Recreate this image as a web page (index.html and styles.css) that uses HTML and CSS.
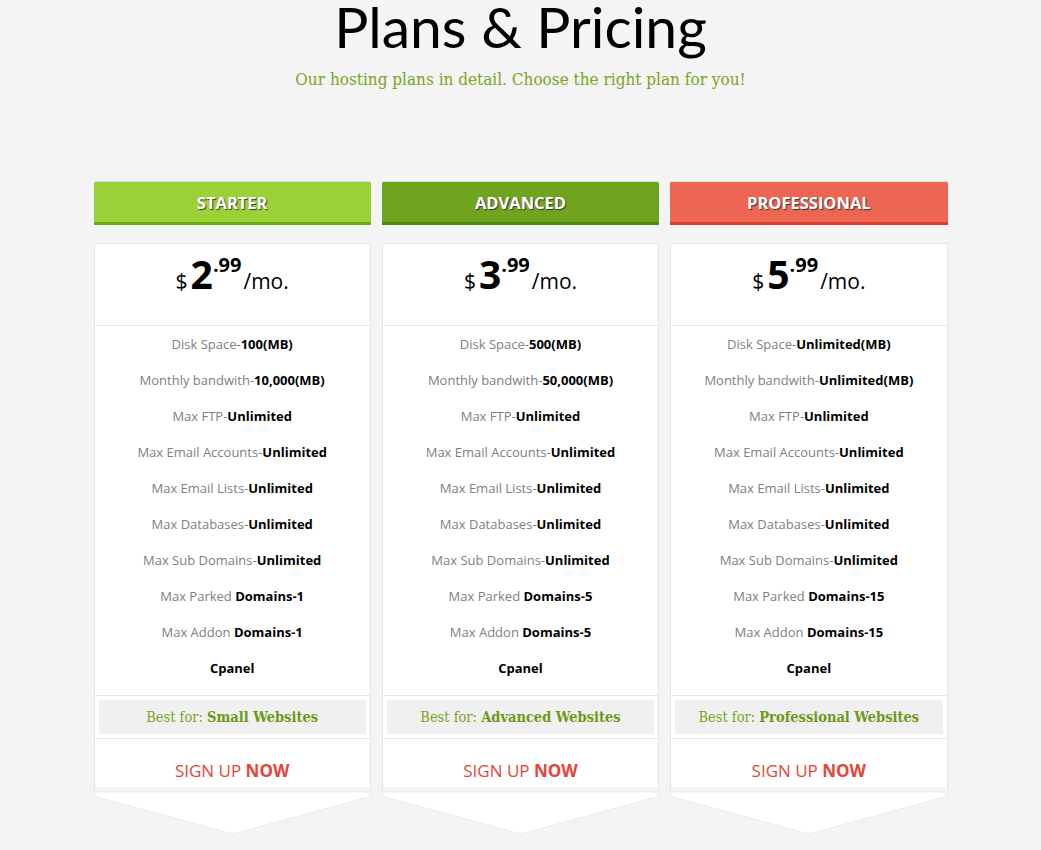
FILE: index.html
```html
<!DOCTYPE html>
<html>
<head>
<meta charset="utf-8">
<link rel="stylesheet" href="styles.css">
</head>
<body>
<header class="intro">
  <h1 class="title">Plans &amp; Pricing</h1>
  <p class="subtitle">Our hosting plans in detail. Choose the right plan for you!</p>
</header>
<main class="plans">
  <section class="plan">
    <div class="plan-head starter">STARTER</div>
    <div class="card">
      <div class="price"><span class="cur">$</span><span class="num">2</span><span class="cents">.99</span><span class="per">/mo.</span></div>
      <ul class="features">
        <li>Disk Space-<b>100(MB)</b></li>
        <li>Monthly bandwith-<b>10,000(MB)</b></li>
        <li>Max FTP-<b>Unlimited</b></li>
        <li>Max Email Accounts-<b>Unlimited</b></li>
        <li>Max Email Lists-<b>Unlimited</b></li>
        <li>Max Databases-<b>Unlimited</b></li>
        <li>Max Sub Domains-<b>Unlimited</b></li>
        <li>Max Parked <b>Domains-1</b></li>
        <li>Max Addon <b>Domains-1</b></li>
        <li><b>Cpanel</b></li>
      </ul>
      <div class="best-wrap"><div class="best">Best for: <b>Small Websites</b></div></div>
      <div class="signup">SIGN UP <b>NOW</b></div>
    </div>
    <svg class="arrow" viewBox="0 0 279 46" preserveAspectRatio="none"><path d="M1,1 L278,1 L278,4 Q278,6 274,7 L143,44 Q139.5,45 136,44 L5,7 Q1,6 1,4 Z" fill="#fff" stroke="#e9e9e9" stroke-width="1"/></svg>
  </section>
  <section class="plan">
    <div class="plan-head advanced">ADVANCED</div>
    <div class="card">
      <div class="price"><span class="cur">$</span><span class="num">3</span><span class="cents">.99</span><span class="per">/mo.</span></div>
      <ul class="features">
        <li>Disk Space-<b>500(MB)</b></li>
        <li>Monthly bandwith-<b>50,000(MB)</b></li>
        <li>Max FTP-<b>Unlimited</b></li>
        <li>Max Email Accounts-<b>Unlimited</b></li>
        <li>Max Email Lists-<b>Unlimited</b></li>
        <li>Max Databases-<b>Unlimited</b></li>
        <li>Max Sub Domains-<b>Unlimited</b></li>
        <li>Max Parked <b>Domains-5</b></li>
        <li>Max Addon <b>Domains-5</b></li>
        <li><b>Cpanel</b></li>
      </ul>
      <div class="best-wrap"><div class="best">Best for: <b>Advanced Websites</b></div></div>
      <div class="signup">SIGN UP <b>NOW</b></div>
    </div>
    <svg class="arrow" viewBox="0 0 279 46" preserveAspectRatio="none"><path d="M1,1 L278,1 L278,4 Q278,6 274,7 L143,44 Q139.5,45 136,44 L5,7 Q1,6 1,4 Z" fill="#fff" stroke="#e9e9e9" stroke-width="1"/></svg>
  </section>
  <section class="plan">
    <div class="plan-head professional">PROFESSIONAL</div>
    <div class="card">
      <div class="price"><span class="cur">$</span><span class="num">5</span><span class="cents">.99</span><span class="per">/mo.</span></div>
      <ul class="features">
        <li>Disk Space-<b>Unlimited(MB)</b></li>
        <li>Monthly bandwith-<b>Unlimited(MB)</b></li>
        <li>Max FTP-<b>Unlimited</b></li>
        <li>Max Email Accounts-<b>Unlimited</b></li>
        <li>Max Email Lists-<b>Unlimited</b></li>
        <li>Max Databases-<b>Unlimited</b></li>
        <li>Max Sub Domains-<b>Unlimited</b></li>
        <li>Max Parked <b>Domains-15</b></li>
        <li>Max Addon <b>Domains-15</b></li>
        <li><b>Cpanel</b></li>
      </ul>
      <div class="best-wrap"><div class="best">Best for: <b>Professional Websites</b></div></div>
      <div class="signup">SIGN UP <b>NOW</b></div>
    </div>
    <svg class="arrow" viewBox="0 0 279 46" preserveAspectRatio="none"><path d="M1,1 L278,1 L278,4 Q278,6 274,7 L143,44 Q139.5,45 136,44 L5,7 Q1,6 1,4 Z" fill="#fff" stroke="#e9e9e9" stroke-width="1"/></svg>
  </section>
</main>
</body>
</html>
```
FILE: styles.css
```css
html, body {
  margin: 0;
  padding: 0;
  background: #f4f4f4;
}
body {
  font-family: "Open Sans", "Liberation Sans", sans-serif;
}
.intro {
  text-align: center;
}
.title {
  margin: 0;
  font-family: Lato, "Open Sans", sans-serif;
  font-weight: 400;
  font-size: 57px;
  line-height: 52px;
  color: #000;
}
.subtitle {
  margin: 16px 0 0;
  font-family: "DejaVu Serif Condensed", "DejaVu Serif", serif;
  font-size: 17px;
  line-height: 22px;
  color: #7aa523;
}
.plans {
  width: 854px;
  margin: 91px auto 0;
  display: grid;
  grid-template-columns: repeat(3, 1fr);
  column-gap: 11px;
}
.plan {
  display: flex;
  flex-direction: column;
}
.plan-head {
  height: 40px;
  line-height: 41px;
  text-align: center;
  color: #fff;
  font-family: "Open Sans", sans-serif;
  font-weight: 700;
  font-size: 16.5px;
  text-shadow: 1px 1px 1px #3a3a3a;
  border-top: 1px solid #dcdcdc;
  border-radius: 2px 2px 0 0;
  margin-bottom: 18px;
}
.starter {
  background: #9ad136;
  border-bottom: 3px solid #6aad17;
}
.advanced {
  background: #70a41f;
  border-bottom: 3px solid #4e8b0f;
}
.professional {
  background: #ec6652;
  border-bottom: 3px solid #da3f2c;
}
.card {
  background: #fff;
  border: 1px solid #e6e6e6;
  border-bottom: none;
}
.price {
  height: 82px;
  box-sizing: border-box;
  padding-top: 1px;
  border-bottom: 1px solid #e6e6e6;
  text-align: center;
  line-height: 40px;
  color: #000;
}
.cur {
  font-size: 21px;
  margin-right: 3px;
}
.num {
  font-size: 39px;
  font-weight: 700;
}
.cents {
  font-size: 20px;
  font-weight: 700;
  vertical-align: 17px;
}
.per {
  font-size: 21px;
  margin-left: 2px;
}
.features {
  list-style: none;
  margin: 0;
  padding: 0 0 9px;
  border-bottom: 1px solid #e6e6e6;
}
.features li {
  height: 36px;
  line-height: 36px;
  text-align: center;
  font-size: 13px;
  color: #808080;
}
.features b {
  color: #000;
  font-weight: 700;
}
.best-wrap {
  padding: 4px;
  border-bottom: 1px solid #e6e6e6;
}
.best {
  background: #f0f0f0;
  height: 34px;
  line-height: 34px;
  text-align: center;
  font-family: "DejaVu Serif Condensed", "DejaVu Serif", serif;
  font-size: 14.5px;
  color: #7aa523;
}
.best b {
  font-weight: 700;
  color: #6c9a17;
}
.signup {
  height: 48px;
  line-height: 64px;
  text-align: center;
  font-size: 17px;
  color: #e2473b;
  border-bottom: 4px solid #f4f4f4;
}
.signup b {
  font-weight: 700;
}
.arrow {
  display: block;
  width: 100%;
  height: 44px;
}
```
